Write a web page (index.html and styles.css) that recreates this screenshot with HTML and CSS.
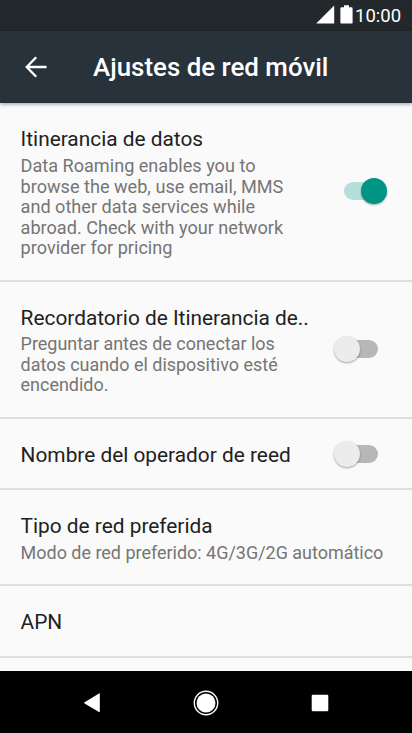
FILE: index.html
```
<!DOCTYPE html>
<html lang="es">
<head>
    <meta charset="UTF-8">
    <meta name="viewport" content="width=device-width, initial-scale=1.0">
    <title>Ajustes de red móvil</title>
    <link rel="stylesheet" href="styles.css">
</head>
<body>
    <div class="screen">
        <div class="status-bar">
            <svg class="signal" width="19" height="19" viewBox="0 0 19 19"><path d="M18.2 0.5V18.5H0.2z" fill="#fff"/></svg>
            <svg class="battery" width="13" height="19" viewBox="0 0 13 19"><path d="M4 0.2h5v2h2.4q1.2 0 1.2 1.2v14q0 1.2-1.2 1.2H1.6q-1.2 0-1.2-1.2v-14q0-1.2 1.2-1.2H4z" fill="#fff"/></svg>
            <span class="clock">10:00</span>
        </div>

        <header class="toolbar">
            <svg class="back" width="22" height="22" viewBox="0 0 22 22"><path d="M21.5 11H2M11.2 1.3L1.7 11l9.5 9.7" fill="none" stroke="#fff" stroke-width="2.3"/></svg>
            <h1>Ajustes de red móvil</h1>
        </header>

        <main class="settings">
            <div class="row roaming">
                <div class="text">
                    <div class="title">Itinerancia de datos</div>
                    <div class="summary">Data Roaming enables you to<br>browse the web, use email, MMS<br>and other data services while<br>abroad. Check with your network<br>provider for pricing</div>
                </div>
                <div class="switch on"><div class="thumb"></div></div>
            </div>

            <div class="row reminder">
                <div class="text">
                    <div class="title">Recordatorio de Itinerancia de..</div>
                    <div class="summary">Preguntar antes de conectar los<br>datos cuando el dispositivo esté<br>encendido.</div>
                </div>
                <div class="switch"><div class="thumb"></div></div>
            </div>

            <div class="row operator">
                <div class="text">
                    <div class="title">Nombre del operador de reed</div>
                </div>
                <div class="switch"><div class="thumb"></div></div>
            </div>

            <div class="row network-type">
                <div class="text">
                    <div class="title">Tipo de red preferida</div>
                    <div class="summary">Modo de red preferido: 4G/3G/2G automático</div>
                </div>
            </div>

            <div class="row apn">
                <div class="text">
                    <div class="title">APN</div>
                </div>
            </div>
        </main>

        <nav class="nav-bar">
            <svg width="18" height="20" viewBox="0 0 18 20"><path d="M15.8 0.9v17.6q0 .9-.8.5L.6 10.4q-.9-.6 0-1.2L15 .5q.8-.4.8.4z" fill="#fff"/></svg>
            <svg class="home" width="26" height="26" viewBox="0 0 26 26"><circle cx="13" cy="13" r="11.7" fill="none" stroke="#fff" stroke-width="1.4"/><circle cx="13" cy="13" r="9.5" fill="#fff"/></svg>
            <svg width="18" height="18" viewBox="0 0 18 18"><rect x="0.7" y="0.7" width="16.6" height="16.6" rx="1.2" fill="#fff"/></svg>
        </nav>
    </div>
</body>
</html>
```
FILE: styles.css
```
* {
    box-sizing: border-box;
}
body {
    margin: 0;
    font-family: Roboto, sans-serif;
    background: #000;
}
.screen {
    display: flex;
    flex-direction: column;
    width: 412px;
    height: 733px;
    overflow: hidden;
}
.status-bar {
    display: flex;
    justify-content: flex-end;
    height: 31px;
    padding: 5px 10px 0 0;
    background: #22282b;
    color: #fff;
}
.battery {
    margin-left: 5px;
}
.clock {
    width: 47px;
    margin-left: 2px;
    font-size: 18.5px;
    line-height: 22px;
    white-space: nowrap;
}
.toolbar {
    display: flex;
    align-items: center;
    height: 72px;
    padding-left: 25px;
    background: #27323a;
    color: #fff;
    box-shadow: 0 1px 4px rgba(0,0,0,0.4);
    z-index: 1;
}
.toolbar h1 {
    margin: 0 0 1px 46px;
    font-size: 25.9px;
    font-weight: 500;
    line-height: 30px;
}
.settings {
    flex: 1;
    background: #fafafa;
}
.row {
    display: flex;
    justify-content: space-between;
    padding: 23px 24px 0 20.6px;
    border-bottom: 2px solid #dedede;
}
.roaming {
    height: 179px;
}
.reminder {
    height: 137px;
}
.operator {
    height: 71px;
}
.network-type {
    height: 96px;
}
.apn {
    height: 72px;
}
.title {
    font-size: 20.85px;
    line-height: 26px;
    color: #212121;
    white-space: nowrap;
}
.summary {
    margin-top: 4px;
    font-size: 17.97px;
    line-height: 20.6px;
    color: #757575;
    white-space: nowrap;
}
.roaming .summary {
    font-size: 18.1px;
}
.reminder .summary {
    margin-top: 3px;
}
.switch {
    flex: none;
    width: 35px;
    height: 18px;
    margin: 35px 10px 0 0;
    border-radius: 9px;
    background: #b7b7b7;
}
.thumb {
    width: 26px;
    height: 26px;
    margin: -4px 0 0 -9px;
    border-radius: 50%;
    background: #ececec;
    box-shadow: 0 1px 2px rgba(0,0,0,0.35);
}
.roaming .switch {
    width: 43px;
    margin: 56px 1px 0 0;
    background: #b5dfda;
}
.on .thumb {
    margin-left: 17px;
    background: #009485;
}
.operator .switch {
    margin-top: 3px;
}
.nav-bar {
    display: flex;
    justify-content: space-between;
    align-items: center;
    height: 62px;
    padding: 1px 83px 0 84px;
    background: #000;
}
.home {
    margin-right: 2px;
}
```
